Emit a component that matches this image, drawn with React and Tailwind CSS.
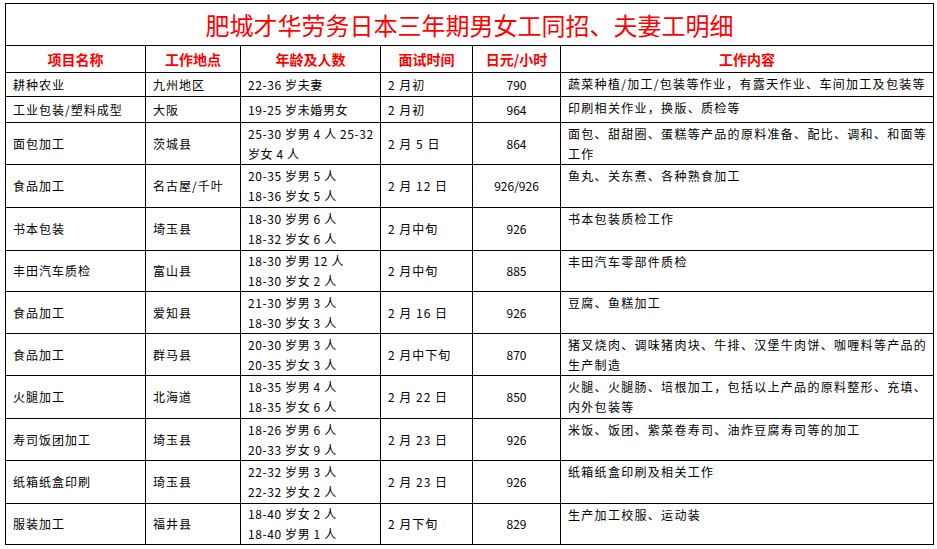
import React from 'react';

const rows = [
  { h: 'h-[24px]', name: '耕种农业', place: '九州地区', age: ['22-36 岁夫妻'], date: '2 月初', pay: '790', work: ['蔬菜种植/加工/包装等作业，有露天作业、车间加工及包装等'] },
  { h: 'h-[26px]', name: '工业包装/塑料成型', place: '大阪', age: ['19-25 岁未婚男女'], date: '2 月初', pay: '964', work: ['印刷相关作业，换版、质检等'] },
  { h: 'h-[42px]', name: '面包加工', place: '茨城县', age: ['25-30 岁男 4 人 25-32', '岁女 4 人'], date: '2 月 5 日', pay: '864', work: ['面包、甜甜圈、蛋糕等产品的原料准备、配比、调和、和面等', '工作'] },
  { h: 'h-[43px]', name: '食品加工', place: '名古屋/千叶', age: ['20-35 岁男 5 人', '18-36 岁女 5 人'], date: '2 月 12 日', pay: '926/926', work: ['鱼丸、关东煮、各种熟食加工'] },
  { h: 'h-[43px]', name: '书本包装', place: '埼玉县', age: ['18-30 岁男 6 人', '18-32 岁女 6 人'], date: '2 月中旬', pay: '926', work: ['书本包装质检工作'] },
  { h: 'h-[41px]', name: '丰田汽车质检', place: '富山县', age: ['18-30 岁男 12 人', '18-30 岁女 2 人'], date: '2 月中旬', pay: '885', work: ['丰田汽车零部件质检'] },
  { h: 'h-[42px]', name: '食品加工', place: '爱知县', age: ['21-30 岁男 3 人', '18-30 岁女 3 人'], date: '2 月 16 日', pay: '926', work: ['豆腐、鱼糕加工'] },
  { h: 'h-[42px]', name: '食品加工', place: '群马县', age: ['20-30 岁男 3 人', '20-35 岁女 3 人'], date: '2 月中下旬', pay: '870', work: ['猪叉烧肉、调味猪肉块、牛排、汉堡牛肉饼、咖喱料等产品的', '生产制造'] },
  { h: 'h-[43px]', name: '火腿加工', place: '北海道', age: ['18-35 岁男 4 人', '18-35 岁女 6 人'], date: '2 月 22 日', pay: '850', work: ['火腿、火腿肠、培根加工，包括以上产品的原料整形、充填、', '内外包装等'] },
  { h: 'h-[42px]', name: '寿司饭团加工', place: '埼玉县', age: ['18-26 岁男 6 人', '20-33 岁女 9 人'], date: '2 月 23 日', pay: '926', work: ['米饭、饭团、紫菜卷寿司、油炸豆腐寿司等的加工'] },
  { h: 'h-[43px]', name: '纸箱纸盒印刷', place: '琦玉县', age: ['22-32 岁男 3 人', '22-32 岁女 2 人'], date: '2 月 23 日', pay: '926', work: ['纸箱纸盒印刷及相关工作'] },
  { h: 'h-[41px]', name: '服装加工', place: '福井县', age: ['18-40 岁女 2 人', '18-40 岁男 1 人'], date: '2 月下旬', pay: '829', work: ['生产加工校服、运动装'] },
];

const headers = ['项目名称', '工作地点', '年龄及人数', '面试时间', '日元/小时', '工作内容'];

const cell = 'border-r border-b border-black flex items-center';

const App = () => {
  return (
    <div className="w-[937px] h-[549px] bg-white overflow-hidden pt-[3px] pl-[5px] text-black font-['Noto_Sans_CJK_SC',sans-serif]">
      <div className="grid grid-cols-[140px_95px_140px_92px_88px_373px] w-[929px] border-l border-t border-black">
        <div className="col-span-6 h-[42px] border-r border-b border-black flex items-center justify-center text-[24px] leading-none text-[#ff0000]">
          肥城才华劳务日本三年期男女工同招、夫妻工明细
        </div>

        {headers.map((t) => (
          <div key={t} className={`${cell} h-[27px] justify-center text-[14px] font-bold text-[#ff0000] leading-none`}>
            {t}
          </div>
        ))}

        {rows.map((r, i) => (
          <React.Fragment key={i}>
            <div className={`${cell} ${r.h} pl-[7px] text-[12px] tracking-[1px] whitespace-nowrap`}>{r.name}</div>
            <div className={`${cell} ${r.h} pl-[7px] text-[12px] tracking-[1px] whitespace-nowrap`}>{r.place}</div>
            <div className={`${cell} ${r.h} pl-[7px] text-[12px] tracking-[0.6px] leading-[20px]`}>
              <div>
                {r.age.map((a) => (
                  <div key={a} className="whitespace-nowrap">{a}</div>
                ))}
              </div>
            </div>
            <div className={`${cell} ${r.h} pl-[7px] text-[12px] tracking-[1px] whitespace-nowrap`}>{r.date}</div>
            <div className={`${cell} ${r.h} justify-center text-[12px] whitespace-nowrap`}>{r.pay}</div>
            <div className={`${r.h} border-r border-b border-black pl-[7px] pt-[1px] text-[12px] tracking-[1.3px] leading-[20px]`}>
              {r.work.map((w) => (
                <div key={w} className="whitespace-nowrap">{w}</div>
              ))}
            </div>
          </React.Fragment>
        ))}
      </div>
    </div>
  );
};

export default App;
